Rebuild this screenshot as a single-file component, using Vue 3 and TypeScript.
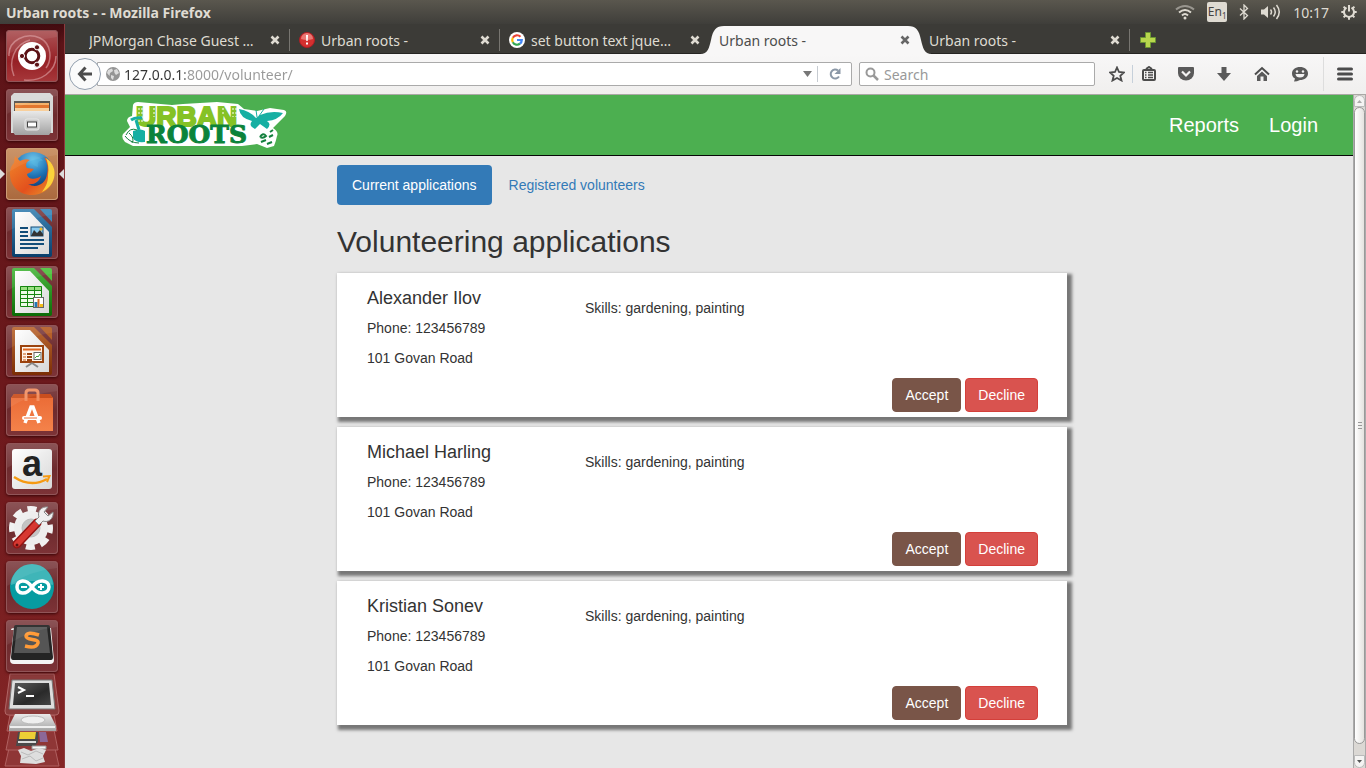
<script setup lang="ts">
import { ref } from 'vue'

interface BrowserTab {
  title: string
  icon: 'none' | 'alert' | 'google'
  active?: boolean
}

interface Application {
  name: string
  phone: string
  address: string
  skills: string
}

const tabs: BrowserTab[] = [
  { title: 'JPMorgan Chase Guest …', icon: 'none' },
  { title: 'Urban roots -', icon: 'alert' },
  { title: 'set button text jque…', icon: 'google' },
  { title: 'Urban roots -', icon: 'none', active: true },
  { title: 'Urban roots -', icon: 'none' },
]

const launcher = [
  'Dash', 'Files', 'Firefox', 'Writer', 'Calc', 'Impress',
  'Software Center', 'Amazon', 'System Settings', 'Arduino', 'Sublime Text',
]

const applications: Application[] = [
  { name: 'Alexander Ilov', phone: '123456789', address: '101 Govan Road', skills: 'gardening, painting' },
  { name: 'Michael Harling', phone: '123456789', address: '101 Govan Road', skills: 'gardening, painting' },
  { name: 'Kristian Sonev', phone: '123456789', address: '101 Govan Road', skills: 'gardening, painting' },
]

const address = ref('127.0.0.1:8000/volunteer/')
const query = ref('')
</script>

<template>
  <div class="desktop">
    <header class="panel">
      <span class="panel-title">Urban roots - - Mozilla Firefox</span>
      <div class="indicators">
        <svg width="20" height="16" viewBox="0 0 20 16" fill="none" stroke-width="2">
          <path d="M1 5.500Q10-1.500 19 5.500" stroke="#99968f" />
          <path d="M4 8.500Q10 3.500 16 8.500" stroke="#dfdbd2" />
          <path d="M7 11.500Q10 8.500 13 11.500" stroke="#dfdbd2" />
          <circle cx="10" cy="14" r="1.500" fill="#dfdbd2" />
        </svg>
        <span class="lang">En<sub>1</sub></span>
        <svg width="10" height="16" viewBox="0 0 10 16" fill="none" stroke="#dfdbd2" stroke-width="1.300">
          <path d="M1 4.500L8.500 11.500L5 15V1L8.500 4.500L1 11.500" />
        </svg>
        <svg width="20" height="16" viewBox="0 0 20 16" fill="none" stroke="#dfdbd2" stroke-width="1.500">
          <path d="M0 5.500H3L7 2V14L3 10.500H0Z" fill="#dfdbd2" stroke="none" />
          <path d="M9.500 5.500Q11.500 8 9.500 10.500M12.500 3.500Q16 8 12.500 12.500M15.500 1Q21 8 15.500 15" />
        </svg>
        <time>10:17</time>
        <svg width="16" height="16" viewBox="0 0 16 16" fill="none" stroke="#dfdbd2">
          <path d="M5.500 3.600A5 5 0 1 0 10.500 3.600" stroke-width="2" />
          <path d="M8 1V7.500" stroke-width="2" />
          <path d="M.3 8H3M13 8H15.700M8 13V15.700M2.600 2.600L4.500 4.500M13.400 2.600L11.500 4.500M2.600 13.400L4.500 11.500M13.400 13.400L11.500 11.500" stroke-width="2" />
        </svg>
      </div>
    </header>

    <div class="workspace">
      <nav class="launcher" aria-label="Launcher">
        <svg class="defs" width="0" height="0" aria-hidden="true">
          <defs>
            <linearGradient id="metal" x1="0" y1="0" x2="0" y2="1"><stop offset="0" stop-color="#e9e9e9" /><stop offset="1" stop-color="#a2a2a2" /></linearGradient>
            <linearGradient id="paper" x1="0" y1="0" x2="1" y2="1"><stop offset="0" stop-color="#fff" /><stop offset="1" stop-color="#d8d8d8" /></linearGradient>
            <linearGradient id="blueDoc" x1="0" y1="0" x2="0" y2="1"><stop offset="0" stop-color="#3e86b5" /><stop offset="1" stop-color="#083e6b" /></linearGradient>
            <linearGradient id="greenDoc" x1="0" y1="0" x2="0" y2="1"><stop offset="0" stop-color="#4cba40" /><stop offset="1" stop-color="#0b6b06" /></linearGradient>
            <linearGradient id="brownDoc" x1="0" y1="0" x2="0" y2="1"><stop offset="0" stop-color="#bd6a34" /><stop offset="1" stop-color="#7b2d04" /></linearGradient>
            <linearGradient id="fox" x1="0" y1="0" x2="1" y2="1"><stop offset="0" stop-color="#f0862a" /><stop offset=".6" stop-color="#e3511d" /><stop offset="1" stop-color="#e8992d" /></linearGradient>
            <radialGradient id="globe" cx=".5" cy=".2" r=".8"><stop offset="0" stop-color="#63c3ec" /><stop offset=".5" stop-color="#1f72b4" /><stop offset="1" stop-color="#0a2b63" /></radialGradient>
            <linearGradient id="bag" x1="0" y1="0" x2="0" y2="1"><stop offset="0" stop-color="#ea6a35" /><stop offset="1" stop-color="#f4824a" /></linearGradient>
            <linearGradient id="screen" x1="0" y1="0" x2="1" y2="1"><stop offset="0" stop-color="#5a5a5a" /><stop offset=".6" stop-color="#2a2a2a" /><stop offset="1" stop-color="#444" /></linearGradient>
          </defs>
        </svg>
        <button v-for="(app, i) in launcher" :key="app" type="button" class="tile" :class="{ dash: i === 0, running: i === 2 }" :aria-label="app">
          <svg width="52" height="52" viewBox="0 0 52 52" fill="none">
            <g v-if="i === 0">
              <path d="M3 26C2 10 20 2 34 8C46 14 46 30 40 38M8 46C2 32 8 14 24 10M18 50C34 52 50 42 50 26" stroke="#d69497" stroke-width="1.500" opacity=".7" />
              <circle cx="26" cy="26" r="14" fill="#fff" />
              <circle cx="26" cy="26" r="6.800" stroke="#5c1216" stroke-width="3" />
              <g fill="#5c1216" stroke="#fff" stroke-width="1"><circle cx="16" cy="26" r="2.600" /><circle cx="31" cy="17.300" r="2.600" /><circle cx="31" cy="34.700" r="2.600" /></g>
            </g>
            <g v-else-if="i === 1">
              <path d="M5 7L8 4H44L47 7V44H5Z" fill="#d7d9d8" />
              <path d="M8 12H44V23H8Z" fill="#55504b" />
              <path d="M9 14H43V23H9Z" fill="#f5b26a" /><path d="M9 16H43V23H9Z" fill="#e2762e" /><path d="M9 19H43V23H9Z" fill="#f8cf9c" />
              <path d="M7 22H45V43L43 46H9L7 43Z" fill="url(#metal)" />
              <rect x="19" y="30" width="14" height="11" rx="2" fill="#c9c9c9" stroke="#e8e8e8" />
              <rect x="21.500" y="33" width="9" height="5" fill="#fff" stroke="#444" />
            </g>
            <g v-else-if="i === 2">
              <circle cx="27" cy="24" r="20" fill="url(#globe)" />
              <path d="M24 9C29 7 35 9 37 13C33 12 31 15 32 19C27 18 24 14 24 9Z" fill="#58b6dd" opacity=".5" />
              <path d="M9 8L14 13Q19 10 24 12C20 14 19 17 21 20L28 21Q26 24 21 26C22 32 30 32 35 28C33 34 28 37 22 36C30 41 40 36 41 26C43 18 40 13 38 9C46 13 50 22 48 30C45 42 35 47 26 47C12 47 4 37 4 26C4 20 6 17 8 15Z" fill="url(#fox)" />
              <path d="M40 10C47 15 50 22 48 30C46 37 42 41 36 44C41 37 42 33 42 27C43 20 42 15 40 10Z" fill="#fbd23b" />
            </g>
            <g v-else-if="i >= 3 && i <= 5">
              <path d="M8 2H28L46 20V48Q46 50 44 50H8Q6 50 6 48V4Q6 2 8 2Z" :fill="['url(#blueDoc)', 'url(#greenDoc)', 'url(#brownDoc)'][i - 3]" />
              <path d="M34 2H44Q46 2 46 4V15Z" :fill="['#3d8abb', '#4fc33f', '#b66028'][i - 3]" />
              <path d="M9 5H24L43 25V47H9Z" fill="url(#paper)" />
              <g v-if="i === 3">
                <path d="M14 21H22M14 25H22M14 29H22M14 33H38M14 37H38M14 41H32" stroke="#124d79" stroke-width="2" />
                <rect x="25" y="20" width="12" height="9" fill="#8bcbef" stroke="#124d79" /><path d="M25 29L28 23L31 26L34 23L37 27V29Z" fill="#333" /><circle cx="35" cy="22" r="1.500" fill="#f3bd26" />
              </g>
              <g v-else-if="i === 4">
                <path d="M14 20H36V41H14Z" fill="#eefbe9" /><path d="M14 20H36V24H14Z" fill="#9be082" />
                <path d="M14.500 20.500H35.500V40.500H14.500ZM14 24.500H36M14 28.500H36M14 32.500H36M14 36.500H36M21.500 20V41M28.500 20V41" stroke="#168610" />
                <rect x="27.500" y="31.500" width="10" height="10" fill="#fff" stroke="#666" /><path d="M30 36V41" stroke="#2279b5" stroke-width="3" /><path d="M32.500 33V41" stroke="#d96b1d" stroke-width="2" /><path d="M35.500 38V41" stroke="#f2bd19" stroke-width="3" />
              </g>
              <g v-else>
                <rect x="15" y="21" width="22" height="16" fill="#fff5ea" stroke="#9b430e" stroke-width="2" />
                <path d="M17 24.500H35" stroke="#df6620" stroke-width="2" /><path d="M17 29H20M17 32H20M17 35H20" stroke="#e2a67c" stroke-width="2" /><path d="M21 29H26M21 32H26M21 35H26" stroke="#9b430e" stroke-width="2" />
                <rect x="28" y="27.500" width="7" height="7" fill="#fff" stroke="#666" /><path d="M29 33L31 31L32 32L34 29" stroke="#40a334" /><path d="M26 38L20 42M26 38L32 42" stroke="#888" stroke-width="2" />
              </g>
            </g>
            <g v-else-if="i === 6">
              <path d="M5 14L8 10H44L47 14V47H5Z" fill="url(#bag)" /><path d="M5 14L8 10H44L47 14Z" fill="#c94e1e" />
              <path d="M20 17V9Q20 6 23 6H29Q32 6 32 9V17" stroke="#f29062" stroke-width="3" />
              <path d="M19 39L25 23H27L33 39" stroke="#fff" stroke-width="3.500" /><path d="M18 34H34" stroke="#fff" stroke-width="4" stroke-linecap="round" /><path d="M18 34H31" stroke="#ec713a" />
            </g>
            <g v-else-if="i === 7">
              <rect x="6" y="6" width="40" height="40" rx="3" fill="url(#paper)" />
              <text x="26" y="33" text-anchor="middle" class="amazon-letter">a</text>
              <path d="M8 34Q25 45 41 36" stroke="#f59a13" stroke-width="2.500" /><path d="M37 33.500L43.500 33L41 39" stroke="#f59a13" stroke-width="2" />
            </g>
            <g v-else-if="i === 8">
              <circle cx="25" cy="26" r="19" stroke="#f1f1f1" stroke-width="6" stroke-dasharray="9 5.900" stroke-dashoffset="4" />
              <circle cx="25" cy="26" r="13" fill="#c4c4c4" stroke="#eee" stroke-width="8" /><circle cx="25" cy="26" r="9" stroke="#bbb" />
              <path d="M11 42L31 21" stroke="#961312" stroke-width="9" stroke-linecap="round" /><path d="M11 42L30 22" stroke="#d73831" stroke-width="6" stroke-linecap="round" />
              <path d="M29 19L33 15C31 10 35 4 42 5L38 10L42 14L47 10C48 17 42 21 37 19L33 23Z" fill="#efefef" stroke="#888" /><circle cx="11" cy="43" r="1.500" fill="#5d1010" />
            </g>
            <g v-else-if="i === 9">
              <circle cx="26" cy="26" r="22" fill="#079ca1" /><path d="M5 24A21 21 0 0 1 47 24Q26 16 5 24Z" fill="#3fb5b8" />
              <path d="M26 26C20 17 11 19 11 26C11 33 20 35 26 26C32 17 43 19 43 26C43 33 32 35 26 26Z" stroke="#fff" stroke-width="3.500" /><path d="M15 26H21M32 26H38M35 23V29" stroke="#fff" stroke-width="2" />
            </g>
            <g v-else>
              <path d="M5 10Q5 8 8 8L4 40Q4 44 8 44H44Q48 44 48 40L45 8Z" fill="#f4f4f4" /><path d="M10 5H42Q44 5 44 7L47 37Q47 40 45 40H7Q5 40 5 37L8 7Q8 5 10 5Z" fill="#242424" /><path d="M11 7H41L44 33H8Z" fill="#555" />
              <path d="M33 15Q21 11 20 16C20 21 33 18 32 23Q30 29 19 26" stroke="#ff9b38" stroke-width="3.500" />
            </g>
            <path d="M3 1H49Q51 1 51 3V7Q26 9 1 25V3Q1 1 3 1Z" fill="#fff" opacity=".07" />
          </svg>
        </button>
        <svg class="stack" width="64" height="96" viewBox="0 0 64 96" fill="none">
          <path d="M10 72H54L59 94H5Z" fill="#8f3636" stroke="#b06060" /><path d="M10 58H54L58 78H6Z" fill="#8f3636" stroke="#b06060" /><path d="M10 43H54L57 59H7Z" fill="#8f3636" stroke="#b06060" /><path d="M10 2H54L59 39Q59 43 56 43H8Q5 43 5 39Z" fill="#8a3a3a" stroke="#b06565" />
          <path d="M12 8H52L55 37H9Z" fill="#ddd" stroke="#777" /><path d="M15 11H49L51 33H13Z" fill="url(#screen)" /><path d="M18 15L24 18L18 21M26 24H34" stroke="#fff" stroke-width="2" />
          <path d="M15 42H50L56 54V59H9V54Z" fill="url(#metal)" /><ellipse cx="33" cy="48" rx="12" ry="4" fill="#eee" stroke="#bbb" /><path d="M10 55H55" stroke="#eee" stroke-width="2" />
          <path d="M18 60H38V70L35 74H16Z" fill="#4b4949" /><path d="M20 60H36L35 67H19Z" fill="#edce35" /><path d="M39 60H46L48 70H40Z" fill="#8c6897" /><path d="M18 70H36" stroke="#ddd" stroke-width="2" /><path d="M32 74H46V77H32Z" fill="#f5f5f5" stroke="#999" />
          <path d="M18 78L24 76L31 79L39 76L46 78L43 84L45 90L36 92L20 91L21 84Z" fill="#dedede" /><path d="M21 80L28 83L36 79L43 82M22 87L30 84L36 89L43 86" stroke="#bbb" />
        </svg>
      </nav>

      <section class="browser">
        <div class="tabstrip">
          <div v-for="(tab, i) in tabs" :key="i" class="tab" :class="{ active: tab.active, divided: i < 2 || i === 4 }">
            <svg v-if="tab.active" class="tab-shape" viewBox="0 0 232 28" preserveAspectRatio="none">
              <path d="M0 28C8 28 9 22 11 14C13 4 16 0 24 0H208C216 0 219 4 221 14C223 22 224 28 232 28Z" fill="#f8f7f7" />
            </svg>
            <svg v-if="tab.icon === 'alert'" class="favicon" width="16" height="16" viewBox="0 0 16 16">
              <circle cx="8" cy="8" r="7.500" fill="#d4302f" stroke="#b01e25" /><path d="M2 7A6 6 0 0 1 14 7Q8 9 2 7Z" fill="#ea7772" /><path d="M7 3H9L8.700 9H7.300ZM7 10.500H9V12.500H7Z" fill="#fff" />
            </svg>
            <svg v-else-if="tab.icon === 'google'" class="favicon" width="16" height="16" viewBox="0 0 16 16" fill="none" stroke-width="2.200">
              <circle cx="8" cy="8" r="8" fill="#fff" /><path d="M11.500 4.800A4.800 4.800 0 0 0 3.800 5.700" stroke="#ea4335" /><path d="M3.800 5.700A4.800 4.800 0 0 0 3.800 10.300" stroke="#fbbc05" /><path d="M3.800 10.300A4.800 4.800 0 0 0 11 11.700" stroke="#34a853" /><path d="M11 11.700A4.800 4.800 0 0 0 12.800 8H8" stroke="#4285f4" />
            </svg>
            <a class="tab-title" href="#">{{ tab.title }}</a>
            <button type="button" class="tab-close" aria-label="Close tab">
              <svg width="10" height="10" viewBox="0 0 10 10" fill="none" stroke="currentColor" stroke-width="2.600"><path d="M1.500 1.500L8.500 8.500M8.500 1.500L1.500 8.500" /></svg>
            </button>
          </div>
          <button type="button" class="new-tab" aria-label="New tab">
            <svg width="16" height="16" viewBox="0 0 16 16"><path d="M5.500.5H10.500V5.500H15.500V10.500H10.500V15.500H5.500V10.500H.5V5.500H5.500Z" fill="#b9d74d" stroke="#6c9632" /></svg>
          </button>
        </div>

        <div class="toolbar">
          <button type="button" class="back" aria-label="Back">
            <svg width="16" height="16" viewBox="0 0 16 16" fill="none" stroke="#4c4c4c" stroke-width="3"><path d="M8.500 1.500L2.500 8L8.500 14.500M3 8H15" /></svg>
          </button>
          <div class="urlbar">
            <svg width="14" height="14" viewBox="0 0 14 14"><circle cx="7" cy="7" r="7" fill="#949494" /><path d="M2 3L6 1.500L7 4L4 6L3.500 9L1 6ZM8 3L11 2L13 6L10 8L8.500 6ZM5 8L8 9L7 13L5 11Z" fill="#dcdcdc" /></svg>
            <input v-model="address" class="url-text" type="text" aria-label="Address" />
            <svg class="caret" width="9" height="6" viewBox="0 0 9 6"><path d="M0 0H9L4.500 6Z" fill="#777" /></svg>
            <button type="button" class="reload" aria-label="Reload">
              <svg width="12" height="12" viewBox="0 0 12 12" fill="none"><path d="M10 8.500A4.500 4.500 0 1 1 9 2.500" stroke="#8b98a7" stroke-width="2" /><path d="M11.500 0V6H5.500Z" fill="#8b98a7" /></svg>
            </button>
          </div>
          <label class="searchbar">
            <svg width="14" height="14" viewBox="0 0 14 14" fill="none" stroke="#999" stroke-width="2"><circle cx="5.500" cy="5.500" r="4" /><path d="M8.500 8.500L13 13" stroke-width="2.500" /></svg>
            <input v-model="query" type="text" placeholder="Search" aria-label="Search" />
          </label>
          <div class="tools">
            <button type="button" aria-label="Bookmark"><svg width="16" height="16" viewBox="0 0 16 16" fill="none" stroke="#4c4c4c" stroke-width="1.800"><path d="M8 1.500L10 6L15 6.500L11.300 9.700L12.500 14.500L8 12L3.500 14.500L4.700 9.700L1 6.500L6 6Z" /></svg></button>
            <button type="button" class="lined" aria-label="Bookmarks list"><svg width="16" height="16" viewBox="0 0 16 16" fill="none" stroke="#4c4c4c"><rect x="2" y="4" width="12" height="10" rx="1" stroke-width="2" /><path d="M5 3L8 1L11 3" stroke-width="2" /><path d="M4 6.500H5.500M7 6.500H12M4 9H5.500M7 9H12M4 11.500H5.500M7 11.500H12" stroke-width="1.300" /></svg></button>
            <button type="button" aria-label="Pocket"><svg width="16" height="16" viewBox="0 0 16 16"><path d="M1 1H15Q16 1 16 2V7A8 7.500 0 0 1 0 7V2Q0 1 1 1Z" fill="#5a5a5a" /><path d="M4 5.500L8 9.500L12 5.500" fill="none" stroke="#f3f2f2" stroke-width="2.200" /></svg></button>
            <button type="button" aria-label="Downloads"><svg width="16" height="16" viewBox="0 0 16 16"><path d="M5.500 1H10.500V7H15L8 15L1 7H5.500Z" fill="#5a5a5a" /></svg></button>
            <button type="button" aria-label="Home"><svg width="16" height="16" viewBox="0 0 16 16" fill="none"><path d="M1 8.500L8 2L15 8.500" stroke="#4c4c4c" stroke-width="2" /><path d="M3 10L8 5.500L13 10V15H9.500V10.500H6.500V15H3Z" fill="#5a5a5a" /></svg></button>
            <button type="button" aria-label="Chat"><svg width="16" height="16" viewBox="0 0 16 16"><path d="M8 1C12.500 1 16 3.500 16 7.500S12.500 14 8 14Q5 15.500 2 15.500L3 12.500Q0 11 0 7.500C0 3.500 3.500 1 8 1Z" fill="#5a5a5a" /><circle cx="5" cy="5.500" r="1.200" fill="#f3f2f2" /><circle cx="11" cy="5.500" r="1.200" fill="#f3f2f2" /><path d="M3.500 8H12.500Q12 11.500 8 11.500T3.500 8Z" fill="#f3f2f2" /></svg></button>
            <button type="button" class="menu" aria-label="Menu"><svg width="16" height="14" viewBox="0 0 16 14" stroke="#4c4c4c" stroke-width="3" stroke-linecap="round"><path d="M1.500 2H14.500M1.500 7H14.500M1.500 12H14.500" /></svg></button>
          </div>
        </div>

        <div class="viewport">
          <div class="page">
            <header class="navbar">
              <a class="brand" href="#" aria-label="Urban Roots">
                <svg width="166" height="48" viewBox="0 0 166 48" fill="none">
                  <path d="M1 33L8 26L5 20Q5 16 10 15L11 4Q12 1 16 1L50 4L61 3L95 1L116 3L122 8L135 10L148 7L162 9Q166 10 163 15L151 27Q157 31 155 35Q154 40 152 45L145 47L135 43L120 45H11L3 41Q-1 37 1 33Z" fill="#fff" />
                  <text x="14" y="25" class="logo-urban">URBAN</text>
                  <path d="M17 7V22M20 7V22M32 7V16M101 7V14M111 7V16M114 7V16" stroke="#fff" stroke-width="1" stroke-dasharray="2 2" />
                  <path d="M117 8Q128 10 134 17L138 14Q149 9 161 12Q156 19 145 20Q150 23 145 28L138 23L133 28Q126 25 130 20Q118 17 117 8Z" fill="#16afa3" /><path d="M137 15L142 8M135 16L134 9" stroke="#16afa3" />
                  <path d="M9 19Q13 16 20 17M14 19L17 29" stroke="#16afa3" stroke-width="3" /><path d="M11 30Q19 27 23 30V41Q13 42 11 37Z" fill="#16afa3" /><path d="M4 34Q8 26 15 29M3 35Q8 42 17 42M7 32Q13 37 10 42" stroke="#14803e" />
                  <text x="24" y="42" class="logo-roots">ROOTS</text>
                  <path d="M138 36Q141 31 144 35Q141 38 138 36M139 41L144 39M147 36L151 34M145 43L150 41M148 31L151 29" stroke="#14803e" stroke-width="2" />
                </svg>
              </a>
              <nav class="nav-links">
                <a href="#">Reports</a>
                <a href="#">Login</a>
              </nav>
            </header>
            <main class="content">
              <nav class="pills">
                <a class="pill selected" href="#">Current applications</a>
                <a class="pill" href="#">Registered volunteers</a>
              </nav>
              <h1>Volunteering applications</h1>
              <div class="cards">
                <article v-for="item in applications" :key="item.name" class="card">
                  <div class="details">
                    <div class="person">
                      <h2>{{ item.name }}</h2>
                      <p>Phone: {{ item.phone }}</p>
                      <p>{{ item.address }}</p>
                    </div>
                    <p class="skills">Skills: {{ item.skills }}</p>
                  </div>
                  <div class="actions">
                    <button type="button" class="accept">Accept</button>
                    <button type="button" class="decline">Decline</button>
                  </div>
                </article>
              </div>
            </main>
          </div>
          <div class="scrollbar">
            <button type="button" class="up" aria-label="Scroll up"><svg width="5" height="3" viewBox="0 0 5 3"><path d="M0 3H5L2.500 0Z" fill="#aaa" /></svg></button>
            <div class="thumb"><svg width="4" height="8" viewBox="0 0 4 8" stroke="#999"><path d="M0 .5H4M0 3.500H4M0 6.500H4" /></svg></div>
            <button type="button" class="down" aria-label="Scroll down"><svg width="5" height="3" viewBox="0 0 5 3"><path d="M0 0H5L2.500 3Z" fill="#555" /></svg></button>
          </div>
        </div>
      </section>
    </div>
  </div>
</template>

<style>
html, body { margin: 0; overflow: hidden; }
</style>

<style scoped>
* { box-sizing: border-box; }
button { margin: 0; padding: 0; border: 0; background: none; font: inherit; color: inherit; }
input { min-width: 0; margin: 0; padding: 0; border: 0; outline: 0; background: none; font: inherit; }
a { color: inherit; text-decoration: none; }
svg { display: block; flex: none; }

.desktop { display: flex; flex-direction: column; height: 100vh; overflow: hidden; font-family: "Noto Sans", "Open Sans", sans-serif; font-size: 14px; }
.panel { display: flex; flex: none; align-items: center; justify-content: space-between; height: 24px; padding: 0 9px 0 6px; color: #dfdbd2; background: linear-gradient(#5a574e, #3f3e3a); }
.panel-title { font-size: 14px; font-weight: 700; }
.indicators { display: flex; align-items: center; gap: 12px; }
.lang { width: 20px; height: 20px; border-radius: 2px; background: #dfdbd2; color: #45433f; font-size: 12px; line-height: 20px; text-align: center; white-space: nowrap; }
.lang sub { font-size: 8px; line-height: 0; }

.workspace { display: flex; flex: 1; min-height: 0; }
.launcher { display: flex; flex: none; flex-direction: column; align-items: center; gap: 7px; width: 65px; padding: 6px 1px 0 0; overflow: hidden; border-right: 1px solid #8d3b3e; background: linear-gradient(#410b0f, #5d1418 20px, #701a1d 60%, #852626); }
.defs { position: absolute; }
.tile { position: relative; flex: none; width: 52px; height: 52px; border-radius: 4px; background: linear-gradient(#83474a, #6d2b2e 50%, #7d3337); box-shadow: inset 0 0 0 1px #915558, 0 1px 3px #380608; }
.tile.dash { background: linear-gradient(#ac5557, #962025 60%, #a7383b); }
.tile.running { background: linear-gradient(#c78c5d, #aa693e); box-shadow: inset 0 0 0 1px #cc9b75, 0 1px 3px #380608; }
.tile.running::before, .tile.running::after { content: ""; position: absolute; top: 21px; border: 5px solid transparent; }
.tile.running::before { left: -6px; border-left-color: #ddd; border-right: 0; }
.tile.running::after { right: -6px; border-right-color: #ddd; border-left: 0; }
.stack { margin-top: -7px; }
.amazon-letter { font: 700 36px "Liberation Sans", sans-serif; fill: #222; }

.browser { display: flex; flex: 1; flex-direction: column; min-width: 0; }
.tabstrip { display: flex; flex: none; height: 30px; padding: 0 0 0 14px; border-bottom: 1px solid #262522; background: #3c3b37; color: #dfdbd2; }
.tab { position: relative; display: flex; flex: 0 1 210px; align-items: center; min-width: 0; height: 30px; padding: 2px 9px 0 10px; }
.tab.divided::after { content: ""; position: absolute; top: 5px; right: -1px; width: 1px; height: 22px; background: #777570; }
.tab-shape { position: absolute; left: -9px; top: 2px; width: calc(100% + 22px); height: 28px; }
.favicon { margin-right: 6px; }
.tab-title { position: relative; flex: 1; min-width: 0; overflow: hidden; white-space: nowrap; }
.tab-close { position: relative; }
.tab.active { z-index: 1; color: #4c4c4c; }
.tab.active .tab-close { color: #666; }
.new-tab { margin-left: 11px; padding-top: 3px; }

.toolbar { display: flex; flex: none; align-items: center; height: 41px; padding: 0 0 0 4px; border-bottom: 1px solid #aaa8a5; background: linear-gradient(#f8f7f7, #f0efee); }
.back { z-index: 1; display: grid; flex: none; place-items: center; width: 32px; height: 32px; border: 1px solid #929fae; border-radius: 50%; background: #fbfbfb; }
.urlbar, .searchbar { display: flex; align-items: center; height: 24px; border: 1px solid #aaa; background: #fff; }
.urlbar { flex: 1; min-width: 0; margin-left: -4px; padding-left: 8px; border-radius: 0 2px 2px 0; }
.url-text { flex: 1; margin-left: 4px; color: transparent; background: linear-gradient(to right, #333 61px, #999 61px); background-clip: text; -webkit-background-clip: text; }
.caret { margin-right: 5px; }
.reload { display: grid; place-items: center; width: 34px; height: 16px; border-left: 1px solid #c6cbd1; }
.searchbar { flex: none; width: 236px; margin-left: 7px; padding-left: 5px; border-radius: 2px; }
.searchbar input { flex: 1; margin-left: 5px; }
.searchbar input::placeholder { color: #999; opacity: 1; }
.tools { display: flex; flex: none; align-items: center; height: 40px; padding-left: 7px; }
.tools button { display: grid; place-items: center; width: 38px; height: 18px; }
.tools button:first-child { width: 30px; }
.tools .lined { width: 32px; margin-right: 3px; border-left: 1px solid #c6d0da; }
.tools .menu { width: 43px; height: 34px; margin-left: 4px; border-left: 1px solid #ddd; }

.viewport { display: flex; flex: 1; min-height: 0; }
.page { flex: 1; min-width: 0; overflow: hidden; background: #e7e7e7; color: #333; font-family: "Liberation Sans", Arial, sans-serif; font-size: 14px; line-height: 20px; }
.navbar { display: flex; align-items: center; justify-content: space-between; height: 61px; padding: 0 35px 0 57px; border-bottom: 1px solid #080808; background: #4caf50; }
.nav-links { display: flex; gap: 30px; color: #fff; font-size: 20px; }
.logo-urban { font: 700 28px "Liberation Sans", sans-serif; fill: #85c226; stroke: #85c226; stroke-width: 2px; }
.logo-roots { font: 700 25px "DejaVu Serif", serif; fill: #0b833b; stroke: #0b833b; stroke-width: 1px; }
.content { display: grid; grid-template-columns: 272fr 730fr 286fr; padding: 9px 0 40px; }
.content > * { grid-column: 2; }
.pills { display: flex; gap: 2px; }
.pill { padding: 10px 15px; border-radius: 4px; color: #337ab7; }
.pill.selected { background: #337ab7; color: #fff; }
h1 { margin: 20px 0 15px; font-size: 30px; font-weight: 400; line-height: 33px; }
.cards { display: flex; flex-direction: column; gap: 10px; }
.card { padding: 15px 29px 5px 30px; background: #fff; box-shadow: 3px 3px 3px 2px #777; }
.details { display: grid; grid-template-columns: 218fr 453fr; }
h2 { margin: 0; font-size: 18px; font-weight: 400; line-height: 20px; }
p { margin: 10px 0 0; }
.actions { display: flex; justify-content: flex-end; gap: 4px; margin-top: 10px; }
.actions button { padding: 6px 12px; border: 1px solid #795548; border-radius: 4px; color: #fff; line-height: 20px; }
.accept { background: #795548; }
.actions .decline { border-color: #d43f3a; background: #d9534f; }

.scrollbar { display: flex; flex: none; flex-direction: column; width: 13px; background: #dbd8d4; border-left: 1px solid #aaa; border-right: 1px solid #aaa; }
.scrollbar button { display: grid; flex: none; place-items: center; height: 12px; background: #f5f4f3; border: 1px solid #bbb; }
.scrollbar .up { border-radius: 6px 6px 0 0; }
.scrollbar .down { height: 13px; border-radius: 0 0 6px 6px; }
.thumb { display: grid; flex: 1; place-items: center; margin-bottom: 11px; border: 1px solid #999; border-radius: 6px; background: linear-gradient(to right, #fff, #e4e2df); }
</style>
